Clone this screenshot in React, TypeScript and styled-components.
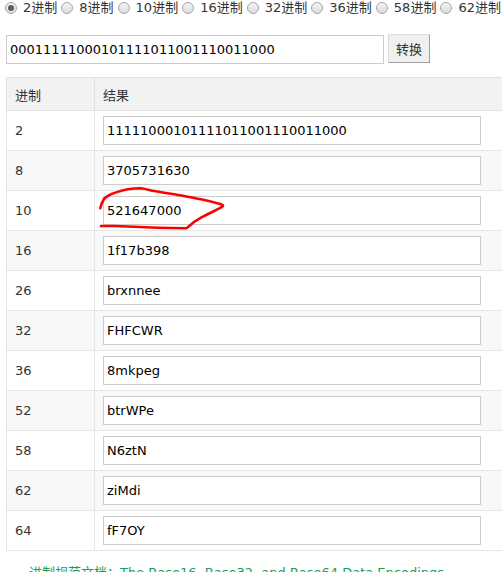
import React from "react";
import styled, { createGlobalStyle } from "styled-components";

const GlobalStyle = createGlobalStyle`
  html, body {
    margin: 0;
    padding: 0;
    overflow: hidden;
    background: #ffffff;
  }
  body {
    font-family: "DejaVu Sans", "Noto Sans CJK SC", sans-serif;
    font-size: 13px;
    color: #333333;
  }
`;

const Page = styled.div`
  width: 502px;
  height: 572px;
  overflow: hidden;
  padding: 0 0 0 6px;
  box-sizing: border-box;
`;

const RadioRow = styled.div`
  display: flex;
  align-items: center;
  height: 15px;
  margin-left: -1px;
  white-space: nowrap;
`;

const RadioItem = styled.label`
  display: inline-flex;
  align-items: center;
  margin-right: 4px;
  flex-shrink: 0;
  cursor: pointer;
`;

const RadioDot = styled.span<{ $checked?: boolean }>`
  position: relative;
  width: 12px;
  height: 12px;
  border-radius: 50%;
  box-sizing: border-box;
  border: 1px solid #a6a6a6;
  background: linear-gradient(#f4f4f4, #dcdcdc);
  margin-right: 6px;
  &::after {
    content: "";
    display: ${(p) => (p.$checked ? "block" : "none")};
    position: absolute;
    left: 2px;
    top: 2px;
    width: 6px;
    height: 6px;
    border-radius: 50%;
    background: #5c5c5c;
  }
`;

const RadioText = styled.span`
  font-size: 13px;
  color: #333333;
  line-height: 15px;
`;

const InputRow = styled.div`
  display: flex;
  align-items: center;
  margin-top: 20px;
  gap: 4px;
`;

const MainInput = styled.input`
  width: 378px;
  height: 29px;
  box-sizing: border-box;
  border: 1px solid #cccccc;
  padding: 0 3px;
  font-family: "DejaVu Sans", "Noto Sans CJK SC", sans-serif;
  font-size: 13px;
  color: #000000;
  outline: none;
`;

const ConvertButton = styled.button`
  width: 42px;
  height: 29px;
  margin-top: -2px;
  box-sizing: border-box;
  border: 1px solid #dcdcdc;
  border-right-color: #a0a0a0;
  border-bottom-color: #a0a0a0;
  background: #f0f0f0;
  font-family: "Noto Sans CJK SC", sans-serif;
  font-size: 13px;
  color: #333333;
  padding: 0;
`;

const Table = styled.table`
  margin-top: 13px;
  width: 530px;
  border-collapse: collapse;
  border: 1px solid #e6e6e6;
`;

const HeadCell = styled.th<{ $first?: boolean }>`
  height: 32px;
  background: #f2f2f2;
  text-align: left;
  font-weight: normal;
  font-size: 13px;
  color: #333333;
  padding: 0 8px;
  width: ${(p) => (p.$first ? "71px" : "auto")};
  border: 1px solid #e2e2e2;
  font-family: "Noto Sans CJK SC", sans-serif;
`;

const Row = styled.tr<{ $striped?: boolean }>`
  background: ${(p) => (p.$striped ? "#f8f8f8" : "#ffffff")};
`;

const Cell = styled.td`
  position: relative;
  padding: 5px 8px 5px 8px;
  border: 1px solid #e6e6e6;
  font-size: 13px;
  color: #333333;
  height: 29px;
`;

const ResultInput = styled.input`
  display: block;
  width: 378px;
  height: 29px;
  box-sizing: border-box;
  border: 1px solid #cccccc;
  background: #ffffff;
  padding: 0 3px;
  font-family: "DejaVu Sans", "Noto Sans CJK SC", sans-serif;
  font-size: 13px;
  color: #000000;
  outline: none;
`;

const Scribble = styled.svg`
  position: absolute;
  left: 0;
  top: 0;
  overflow: visible;
  pointer-events: none;
`;

const DocNote = styled.p`
  margin: 13px 0 0 23px;
  font-size: 13px;
  line-height: 18px;
  color: #1b9e55;
  white-space: nowrap;
  font-family: "DejaVu Sans", "Noto Sans CJK SC", sans-serif;
`;

const radios = ["2", "8", "10", "16", "32", "36", "58", "62", "64"];

const rows: [string, string][] = [
  ["2", "1111100010111101100111001100 0".replace(" ", "")],
  ["8", "3705731630"],
  ["10", "521647000"],
  ["16", "1f17b398"],
  ["26", "brxnnee"],
  ["32", "FHFCWR"],
  ["36", "8mkpeg"],
  ["52", "btrWPe"],
  ["58", "N6ztN"],
  ["62", "ziMdi"],
  ["64", "fF7OY"],
];

export default function App() {
  return (
    <>
      <GlobalStyle />
      <Page>
        <RadioRow>
          {radios.map((r, i) => (
            <RadioItem key={r}>
              <RadioDot $checked={i === 0} />
              <RadioText>{r}进制</RadioText>
            </RadioItem>
          ))}
        </RadioRow>
        <InputRow>
          <MainInput readOnly value="00011111000101111011001110011000" />
          <ConvertButton>转换</ConvertButton>
        </InputRow>
        <Table>
          <thead>
            <tr>
              <HeadCell $first>进制</HeadCell>
              <HeadCell>结果</HeadCell>
            </tr>
          </thead>
          <tbody>
            {rows.map(([base, val], i) => (
              <Row key={base} $striped={i % 2 === 1}>
                <Cell>{base}</Cell>
                <Cell>
                  <ResultInput readOnly value={val} />
                  {base === "10" && (
                    <Scribble width="130" height="40" viewBox="0 0 130 40">
                      <path
                        d="M5.3 17.3 C6 13 7.7 10 9 8 C12 5 14 4 16 3.3 C22 1 28 -1 32.7 -1.7 C38 -2.5 42 -2.7 46 -2.7 C51 -2 55 -0.8 59.3 0 C66 1.2 72 2.2 79.3 3.3 C90 5 98 6.8 106 8.3 C114 10 120 11.5 126 13.3 C128 14 128.5 14.5 127.7 15.3 C125 17 122 18.5 119.3 20 C114 22.5 110 24.5 106 26.7 C101 29.5 97 32.5 94.3 35 C93 36 92 37 91 37.3 C82 37.2 72 37 62.7 36.7 C55 36.4 47 36 39.3 35.7 C32 35.4 25 35.2 19.3 35 C14 35 10 35 6 35"
                        fill="none"
                        stroke="#ff0000"
                        strokeWidth="2.6"
                        strokeLinecap="round"
                        strokeLinejoin="round"
                      />
                    </Scribble>
                  )}
                </Cell>
              </Row>
            ))}
          </tbody>
        </Table>
        <DocNote>进制规范文档：The Base16, Base32, and Base64 Data Encodings</DocNote>
      </Page>
    </>
  );
}
